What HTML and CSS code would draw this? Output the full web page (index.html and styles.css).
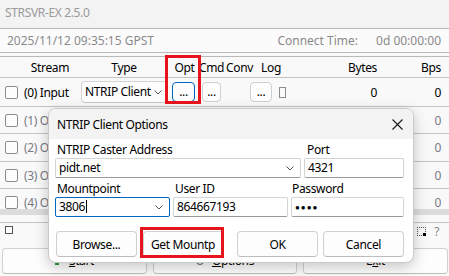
FILE: index.html
```html
<!DOCTYPE html>
<html lang="en">
<head>
    <meta charset="UTF-8">
    <meta name="viewport" content="width=device-width, initial-scale=1.0">
    <title>STRSVR-EX 2.5.0</title>
    <link rel="stylesheet" href="styles.css">
</head>
<body>
    <div class="window">
        <div class="titlebar">STRSVR-EX 2.5.0</div>

        <div class="timebar">
            <span>2025/11/12 09:35:15 GPST</span>
            <span class="connect"><span class="connect-label">Connect Time:</span>0d 00:00:00</span>
        </div>

        <div class="grid">
            <div class="row head">
                <div></div>
                <div class="c">Stream</div>
                <div class="c">Type</div>
                <div class="c">Opt</div>
                <div class="c cmd-h">Cmd</div>
                <div class="c conv-h">Conv</div>
                <div class="c">Log</div>
                <div class="r">Bytes</div>
                <div class="r">Bps</div>
            </div>
            <div class="row first">
                <div><span class="check"></span></div>
                <div class="stream">(0) Input</div>
                <div>
                    <span class="combo small">NTRIP Client
                        <svg class="chev" width="8" height="5" viewBox="0 0 8 5"><polyline points="0.5,0.5 4,4 7.5,0.5" fill="none" stroke="#555" stroke-width="1"/></svg>
                    </span>
                </div>
                <div><span class="dots focus opt">...</span></div>
                <div><span class="dots cmd">...</span></div>
                <div></div>
                <div class="log"><span class="dots logbtn">...</span><span class="logflag"></span></div>
                <div class="r">0</div>
                <div class="r">0</div>
            </div>
            <div class="row off">
                <div><span class="check"></span></div>
                <div class="stream">(1) Output</div>
                <div></div><div></div><div></div><div></div><div></div><div></div>
                <div class="r">0</div>
            </div>
            <div class="row off tall">
                <div><span class="check"></span></div>
                <div class="stream">(2) Output</div>
                <div></div><div></div><div></div><div></div><div></div><div></div>
                <div class="r">0</div>
            </div>
            <div class="row off">
                <div><span class="check"></span></div>
                <div class="stream">(3) Output</div>
                <div></div><div></div><div></div><div></div><div></div><div></div>
                <div class="r">0</div>
            </div>
            <div class="row off">
                <div><span class="check"></span></div>
                <div class="stream">(4) Output</div>
                <div></div><div></div><div></div><div></div><div></div><div></div>
                <div class="r">0</div>
            </div>
        </div>

        <div class="hbar"></div>

        <div class="status">
            <span class="check mini"></span>
            <span class="status-right">
                <span class="resize"></span>
                <span class="help">?</span>
            </span>
        </div>

        <div class="actions">
            <button class="btn"><span class="go"></span><u>S</u>tart</button>
            <button class="btn"><span class="gear"></span><u>O</u>ptions</button>
            <button class="btn">E<u>x</u>it</button>
        </div>

        <!-- highlight around the Opt column -->
        <div class="mark mark-opt"></div>

        <div class="dialog">
            <div class="dlg-title">
                <span>NTRIP Client Options</span>
                <svg class="close" width="11" height="11" viewBox="0 0 11 11"><path d="M0.5 0.5 L10.5 10.5 M10.5 0.5 L0.5 10.5" stroke="#1a1a1a" stroke-width="1.1"/></svg>
            </div>
            <div class="dlg-body">
                <div class="fields">
                    <div class="field addr">
                        <label>NTRIP Caster Address</label>
                        <div class="combo">pidt.net
                            <svg class="chev" width="8" height="5" viewBox="0 0 8 5"><polyline points="0.5,0.5 4,4 7.5,0.5" fill="none" stroke="#555" stroke-width="1"/></svg>
                        </div>
                    </div>
                    <div class="field port">
                        <label>Port</label>
                        <div class="input">4321</div>
                    </div>
                </div>
                <div class="fields">
                    <div class="field mount">
                        <label>Mountpoint</label>
                        <div class="combo focused">3806<span class="caret"></span>
                            <svg class="chev" width="8" height="5" viewBox="0 0 8 5"><polyline points="0.5,0.5 4,4 7.5,0.5" fill="none" stroke="#555" stroke-width="1"/></svg>
                        </div>
                    </div>
                    <div class="field user">
                        <label>User ID</label>
                        <div class="input">864667193</div>
                    </div>
                    <div class="field pass">
                        <label>Password</label>
                        <div class="input pw">&#9679;&#9679;&#9679;&#9679;</div>
                    </div>
                </div>
                <div class="dlg-buttons">
                    <button class="btn browse">Browse...</button>
                    <button class="btn getmnt">Get Mountp</button>
                    <button class="btn ok">OK</button>
                    <button class="btn cancel">Cancel</button>
                </div>
            </div>
        </div>

        <!-- highlight around Get Mountp -->
        <div class="mark mark-get"></div>
    </div>
</body>
</html>
```

FILE: styles.css
```css
body {
    margin: 0;
    background: #f9f9f9;
    font-family: 'Noto Sans', 'Liberation Sans', sans-serif;
    font-size: 12px;
    letter-spacing: -0.35px;
    color: #000;
}
.window {
    position: relative;
    width: 449px;
    height: 276px;
    overflow: hidden;
    background: #f9f9f9;
}
.titlebar {
    box-sizing: border-box;
    height: 29px;
    line-height: 25px;
    padding-left: 5px;
    color: #9a9a9a;
    background: #f3f3f3;
    border-bottom: 1px solid #b9b9b9;
}
.timebar {
    box-sizing: border-box;
    height: 24px;
    display: flex;
    justify-content: space-between;
    align-items: center;
    padding: 0 8px 0 7px;
    color: #8a8a8a;
    background: #fbfbfb;
    border-bottom: 1px solid #b9b9b9;
    margin-bottom: 3px;
    letter-spacing: 0;
}
.connect-label {
    margin-right: 18px;
}
.grid {
    height: 152px;
    overflow: hidden;
    border-top: 1px solid #b9b9b9;
}
.row {
    box-sizing: border-box;
    display: grid;
    grid-template-columns: 22px 56px 92px 29px 27px 24px 42px 88px 69px;
    align-items: center;
    height: 27px;
    border-bottom: 1px solid #c4c4c4;
}
.row.head {
    height: 21px;
}
.row.first {
    height: 29px;
}
.row.tall {
    height: 28px;
}
.row .c {
    text-align: center;
}
.row .cmd-h {
    padding-right: 3px;
}
.row .conv-h {
    padding-right: 3px;
}
.row .r {
    text-align: right;
    padding-right: 3px;
}
.row > div:last-child.r {
    padding-right: 8px;
}
.row.off .stream,
.row.off .r {
    color: #7a7a86;
}
.stream {
    padding-left: 2px;
    white-space: nowrap;
}
.check {
    display: block;
    box-sizing: border-box;
    width: 13px;
    height: 13px;
    margin-left: 5px;
    border: 1px solid #8c8c8c;
    border-radius: 2px;
    background: #fdfdfd;
}
.check.mini {
    width: 8px;
    height: 8px;
    border-radius: 0;
    border-color: #555;
}
.combo {
    position: relative;
    display: block;
    box-sizing: border-box;
    height: 20px;
    line-height: 18px;
    padding-left: 3px;
    background: #fff;
    border: 1px solid #d4d4d4;
    border-bottom-color: #9a9a9a;
    border-radius: 2px;
    white-space: nowrap;
}
.combo.small {
    height: 22px;
    line-height: 20px;
    margin: 0 3px;
    background: #fdfdfd;
    border-bottom-color: #c8c8c8;
    border-radius: 4px;
}
.combo .chev {
    position: absolute;
    right: 6px;
    top: 7px;
}
.combo.small .chev {
    top: 8px;
    right: 4px;
}
.dots {
    display: block;
    box-sizing: border-box;
    height: 20px;
    line-height: 17px;
    text-align: center;
    background: #fdfdfd;
    border: 1px solid #d0d0d0;
    border-radius: 4px;
}
.dots.focus {
    border-color: #0067c0;
}
.dots.opt {
    width: 23px;
    margin-left: 2px;
}
.dots.cmd {
    width: 19px;
    margin-left: 3px;
}
.log {
    display: flex;
    align-items: center;
}
.dots.logbtn {
    width: 22px;
    margin-left: 0;
}
.logflag {
    box-sizing: border-box;
    width: 7px;
    height: 11px;
    margin-left: 7px;
    border: 1px solid #8c8c8c;
}
.hbar {
    height: 6px;
    background: #dcdcdc;
    margin-bottom: 7px;
}
.status {
    box-sizing: border-box;
    height: 21px;
    display: flex;
    align-items: center;
    justify-content: space-between;
    border-top: 1px solid #c4c4c4;
    padding-right: 10px;
}
.status .check.mini {
    margin-left: 5px;
    margin-top: -6px;
}
.status-right {
    display: flex;
    align-items: center;
    margin-top: -4px;
}
.resize {
    position: relative;
    box-sizing: border-box;
    width: 9px;
    height: 9px;
    border: 1px dotted #555;
    margin-right: 8px;
}
.resize::after {
    content: "";
    position: absolute;
    right: -1px;
    bottom: -1px;
    width: 3px;
    height: 3px;
    background: #000;
}
.help {
    color: #8a8a8a;
}
.actions {
    display: grid;
    grid-template-columns: 145px 144px 145px;
    gap: 6px;
    padding: 5px 2px 0 2px;
}
.btn {
    box-sizing: border-box;
    height: 26px;
    padding: 0;
    font-family: inherit;
    font-size: 12px;
    letter-spacing: inherit;
    color: #000;
    background: #fdfdfd;
    border: 1px solid #d0d0d0;
    border-bottom-color: #bdbdbd;
    border-radius: 4px;
}
.actions .btn {
    padding-bottom: 1px;
}
.go {
    display: inline-block;
    width: 4px;
    height: 6px;
    margin-right: 10px;
    background: #2e9a2e;
}
.gear {
    display: inline-block;
    width: 6px;
    height: 6px;
    margin-right: 8px;
    border: 1px solid #555;
    border-radius: 50%;
}
.mark {
    position: absolute;
    box-sizing: border-box;
    border: 3px solid #e8141c;
}
.mark-opt {
    left: 165px;
    top: 55px;
    width: 36px;
    height: 49px;
}
.mark-get {
    left: 140px;
    top: 227px;
    width: 84px;
    height: 31px;
}
.dialog {
    position: absolute;
    left: 48px;
    top: 108px;
    box-sizing: border-box;
    width: 366px;
    height: 155px;
    background: #fff;
    border: 1px solid #c9c9c9;
    border-radius: 8px;
    overflow: hidden;
    box-shadow: 0 4px 14px rgba(0, 0, 0, 0.22);
}
.dlg-title {
    display: flex;
    justify-content: space-between;
    align-items: center;
    height: 29px;
    padding: 1px 10px 0 8px;
    background: #f3f3f3;
}
.dlg-body {
    padding: 0 9px 0 6px;
}
.fields {
    display: flex;
    gap: 3px;
}
.field label {
    display: block;
    height: 14px;
    line-height: 14px;
    margin-top: 4px;
    margin-bottom: 1px;
    padding-left: 2px;
    white-space: nowrap;
}
.field.addr { width: 246px; }
.field.port { width: 100px; }
.field.mount { width: 115px; }
.field.user { width: 115px; }
.field.pass { width: 113px; }
.field.port label { padding-left: 3px; }
.field.pass label { padding-left: 1px; }
.input {
    box-sizing: border-box;
    height: 20px;
    line-height: 18px;
    padding-left: 3px;
    background: #fff;
    border: 1px solid #d4d4d4;
    border-bottom-color: #9a9a9a;
    border-radius: 2px;
}
.combo.focused {
    border-color: #0067c0;
}
.caret {
    display: inline-block;
    width: 1px;
    height: 13px;
    margin-left: 1px;
    vertical-align: -2px;
    background: #000;
}
.input.pw {
    font-size: 8px;
    letter-spacing: 1px;
}
.dlg-buttons {
    display: flex;
    margin-top: 14px;
}
.dlg-buttons .btn {
    width: 81px;
}
.btn.browse { margin-left: 1px; }
.btn.getmnt { width: 80px; margin-left: 6px; }
.btn.ok { margin-left: 14px; }
.btn.cancel { margin-left: 5px; }
```
